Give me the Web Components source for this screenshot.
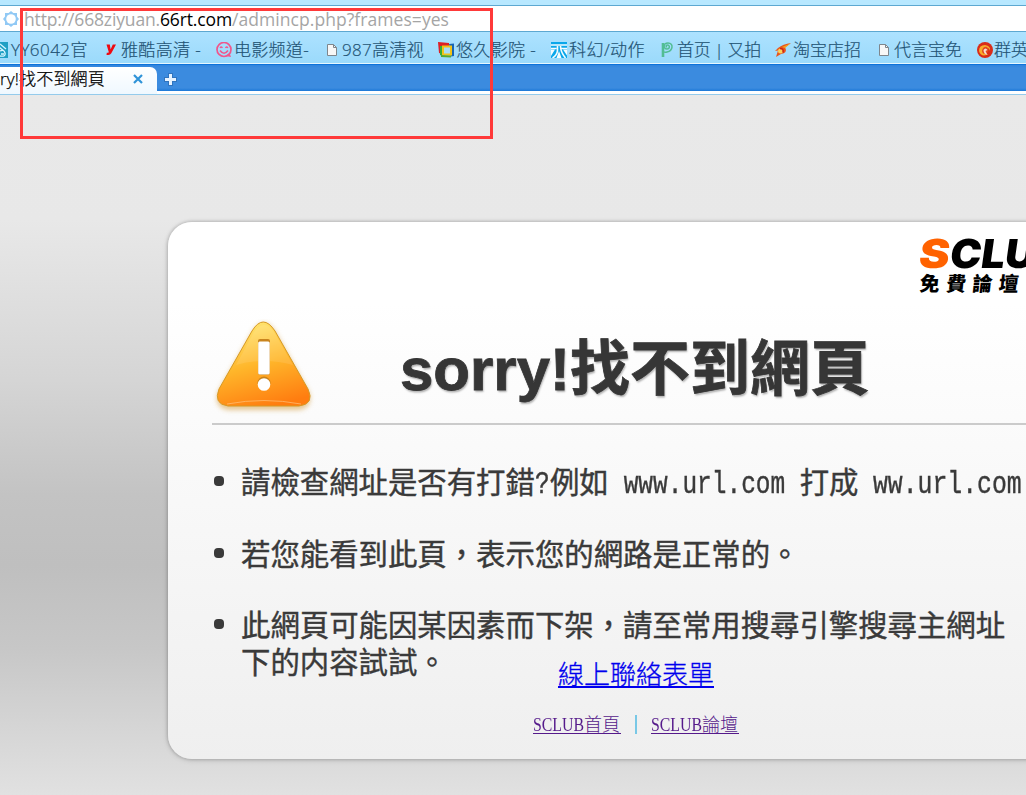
<!DOCTYPE html>
<html lang="zh-Hant">
<head>
<meta charset="utf-8">
<title>sorry!找不到網頁</title>
<style>
  html, body {
    margin: 0;
    height: 100%;
    overflow: hidden;
  }
</style>
</head>
<body>
<browser-window></browser-window>

<script>
// spreads its text over exactly `width` pixels
customElements.define(
  "fit-text",
  class extends HTMLElement {
    constructor() {
      super();
      this.attachShadow({ mode: "open" });
      this.shadowRoot.innerHTML = `
        <style>
          :host { display: inline-block; white-space: nowrap; }
          span { display: inline-block; white-space: pre; transform-origin: 0 50%; }
        </style><span><slot></slot></span>`;
    }

    connectedCallback() {
      const span = this.shadowRoot.querySelector("span");
      const width = Number(this.getAttribute("width"));
      this.style.width = width + "px";
      if (this.hasAttribute("squeeze")) {
        // offsetWidth ignores the skew of a parent
        span.style.transform = `scaleX(${width / span.offsetWidth})`;
      } else {
        const natural = span.getBoundingClientRect().width;
        span.style.letterSpacing = (width - natural) / [...this.textContent].length + "px";
      }
    }
  }
);

const page = '<path d="M3.500 2.500h6l3 3v8h-9z" fill="#f7f7f7" stroke="#7f868c"/><path d="M9.500 2.500v3h3" fill="none" stroke="#7f868c"/>';
const icons = {
  wave: '<rect width="16" height="16" fill="#1f9fc4"/><path d="M8 2l6 5M7 5l5 4M8 9q4-2 5 2t-5 3M9 12h3" fill="none" stroke="#d8f6ff" stroke-width="1.300"/>',
  y: '<path d="M4.500 2.500h3.300l.8 5 2.200-5h3.200l-4.700 8.700q-1 1.800-3 1.800H4.500l.3-2.300h1.300q.8 0 .6-1z" fill="#ee0a12"/>',
  smile: '<circle cx="8" cy="7.500" r="7" fill="none" stroke="#f0568c" stroke-width="1.700"/><path d="M10 14l5 1-1.500-4z" fill="#f0568c"/><path d="M4 8.500q4 5.500 8 0" fill="none" stroke="#f0568c" stroke-width="1.500"/><path d="M4 6q1.200-2 2.400 0M9.500 6q1.200-2 2.400 0" fill="none" stroke="#f0568c" stroke-width="1.300"/>',
  page,
  frame: '<path d="M0 0l11 1v3H4v8L1 11z" fill="#dd1f26"/><path d="M2 4h2v10l-2-1z" fill="#39a935"/><path d="M11 2l5-.5V14l-3 .5z" fill="#1766b5"/><path d="M5 4.500h8v8H5z" fill="#a9dcf5" stroke="#f2c318" stroke-width="2"/><path d="M3 14l10 .6" stroke="#58a82e" stroke-width="2"/>',
  tian: '<path d="M0 0h16v16H0z" fill="#0aa7ea"/><path d="M0 3h16M0 6.500h5.500M10.500 6.500H16M6.500 4v4q0 5-5 8M9.500 4q0 6 5 12" stroke="#f3fcff" stroke-width="1.600" fill="none"/><path d="M8 9l2.500 7h-5zM0 7.500h4L0 14zM16 7.500h-4l4 6z" fill="#f3fcff"/>',
  leaf: '<path d="M4 1v14" stroke="#52bd94" stroke-width="2.600"/><path d="M4 9q1 2 4 1c6-1 7-9 1-9-5 0-5 6-1 6 3 0 3-4 .5-4-2 0-1.500 2-.3 1.900" fill="none" stroke="#52bd94" stroke-width="1.500"/>',
  comet: '<path d="M16 1Q8 2 3 6l-3 3 3-.5L1 15l5-3q7-1 4-7z" fill="#e8551c"/><path d="M15.500 1.500L7 5l3 1zM15 3l-4 5z" fill="#f7a01c"/><circle cx="5.500" cy="9" r="2.500" fill="#fbd35a"/><path d="M5 6.500q4 0 3 4" fill="none" stroke="#cf2416" stroke-width="1.600"/>',
  swirl: '<circle cx="8" cy="8" r="8" fill="#d92d1a"/><path d="M2 9q0-6 6-6 6 1 5 6-1-4-5-3-4 2-1 5 2 2 5 1-8 4-10-3z" fill="#f9ad2c"/><path d="M5 9q1-5 5-4 3 3 0 6-3-1-2-3-1 1-1 4-2-1-2-3z" fill="#e44a20"/><path d="M6.500 8q2-3 4 0l-2 1 2 4q-4-1-4-5z" fill="#f6dfd6"/>'
};

customElements.define(
  "book-mark",
  class extends HTMLElement {
    constructor() {
      super();
      this.attachShadow({ mode: "open" });
    }

    connectedCallback() {
      this.shadowRoot.innerHTML = `
        <style>
          :host {
            display: flex;
            align-items: center;
            gap: var(--gap, 2px);
            flex: none;
          }
          svg { flex: none; }
        </style>
        <svg width="16" height="16" viewBox="0 0 16 16">${icons[this.getAttribute("icon")]}</svg>
        <slot></slot>
      `;
    }
  }
);

customElements.define(
  "address-bar",
  class extends HTMLElement {
    constructor() {
      super();
      this.attachShadow({ mode: "open" });
      this.shadowRoot.innerHTML = `
        <style>
          :host {
            display: flex;
            align-items: center;
            box-sizing: border-box;
            height: 27px;
            margin-top: 5px;
            padding-left: 3px;
            gap: 5px;
            border: solid #5da8d1;
            border-width: 1px 0;
            background: #fff;
            font: 17.500px/24px "Open Sans", "Noto Sans", sans-serif;
            color: #a5a5a5;
          }
          b { font-weight: 400; color: #000; }
          .url { display: flex; margin-top: 1px; }
        </style>
        <svg width="16" height="16" viewBox="0 0 16 16">
          <path d="M8 0l2.400 2H14v3.600L16 8l-2 2.400V14h-3.600L8 16l-2.400-2H2v-3.600L0 8l2-2.400V2h3.600z" fill="#91c9f5"/>
          <circle cx="8" cy="8" r="4.800" fill="#fff"/>
        </svg>
        <div class="url"><fit-text width="136">http://668ziyuan.</fit-text><b><fit-text width="72">66rt.com</fit-text></b><fit-text width="217">/admincp.php?frames=yes</fit-text></div>
      `;
    }
  }
);

customElements.define(
  "bookmark-bar",
  class extends HTMLElement {
    constructor() {
      super();
      this.attachShadow({ mode: "open" });
      this.shadowRoot.innerHTML = `
        <style>
          :host {
            display: flex;
            box-sizing: border-box;
            height: 32px;
            padding-top: 4px;
            margin-left: -8px;
            border-bottom: 1px solid #e4f6ff;
            background: linear-gradient(#ade2ff, #9bdafb);
            color: #1f5374;
            font: 300 17px/27px "Open Sans", "Noto Sans CJK SC", sans-serif;
            -webkit-text-stroke: .2px;
            overflow: hidden;
          }
        </style>
        <book-mark icon="wave" style="width:110px; --gap:3px"><fit-text width="77">YY6042官</fit-text></book-mark>
        <book-mark icon="y" style="width:114px; --gap:3px"><fit-text width="80">雅酷高清 -</fit-text></book-mark>
        <book-mark icon="smile" style="width:108px"><fit-text width="75">电影频道-</fit-text></book-mark>
        <book-mark icon="page" style="width:114px"><fit-text width="82">987高清视</fit-text></book-mark>
        <book-mark icon="frame" style="width:113px"><fit-text width="80">悠久影院 -</fit-text></book-mark>
        <book-mark icon="tian" style="width:108px"><fit-text width="76">科幻/动作</fit-text></book-mark>
        <book-mark icon="leaf" style="width:116px"><fit-text width="84">首页 | 又拍</fit-text></book-mark>
        <book-mark icon="comet" style="width:101px"><fit-text width="68">淘宝店招</fit-text></book-mark>
        <book-mark icon="page" style="width:101px"><fit-text width="68">代言宝免</fit-text></book-mark>
        <book-mark icon="swirl" style="--gap:1px"><fit-text width="34">群英</fit-text></book-mark>
      `;
    }
  }
);

customElements.define(
  "tab-strip",
  class extends HTMLElement {
    constructor() {
      super();
      this.attachShadow({ mode: "open" });
      this.shadowRoot.innerHTML = `
        <style>
          :host {
            display: flex;
            box-sizing: border-box;
            height: 31px;
            border-bottom: 1px solid #94cbec;
            background: linear-gradient(#0d73da 0 1px, #2f84de 1px, #3b8bdf 4px, #3b8bdf 24px, #1c78d7 27px, #fff 27px);
          }
          .tab {
            display: flex;
            align-items: center;
            justify-content: space-between;
            box-sizing: border-box;
            width: 157px;
            height: 27px;
            margin-top: 3px;
            padding: 0 14px 3px 0;
            border-radius: 0 7px 0 0;
            background: linear-gradient(#fff, #eff8ff);
            font: 300 17px/24px "Open Sans", "Noto Sans CJK TC", sans-serif;
            color: #000;
            -webkit-text-stroke: .25px;
          }
          .plus { margin: 9px 0 0 7px; }
        </style>
        <div class="tab">
          <fit-text width="105">ry!找不到網頁</fit-text>
          <svg width="10" height="10" viewBox="0 0 10 10"><path d="M1 1l8 8M9 1l-8 8" stroke="#2f93d8" stroke-width="2.200"/></svg>
        </div>
        <svg class="plus" width="13" height="13" viewBox="0 0 13 13"><path d="M6.500 0v13M0 6.500h13" stroke="#2f74bf" stroke-width="5"/><path d="M6.500 1v11M1 6.500h11" stroke="#e6f3ff" stroke-width="3"/></svg>
      `;
    }
  }
);

customElements.define(
  "hint-item",
  class extends HTMLElement {
    constructor() {
      super();
      this.attachShadow({ mode: "open" });
      this.shadowRoot.innerHTML = `
        <style>
          :host {
            display: flex;
            gap: 17px;
            white-space: nowrap;
          }
          i {
            flex: none;
            width: 10px;
            height: 10px;
            margin: 14px 0 0 2px;
            border-radius: 4px;
            background: #3a3a3a;
          }
        </style>
        <i></i>
        <div><slot></slot></div>
      `;
    }
  }
);

customElements.define(
  "site-logo",
  class extends HTMLElement {
    constructor() {
      super();
      this.attachShadow({ mode: "open" });
      this.shadowRoot.innerHTML = `
        <style>
          :host {
            display: block;
            width: 150px;
            color: #000;
            white-space: nowrap;
          }
          .name {
            display: flex;
            height: 36px;
            margin-left: -3px;
            font: 900 40px/36px Inter, sans-serif;
            transform: skewX(-8deg);
            transform-origin: 0 100%;
          }
          .name b { color: #ff6200; font-weight: 900; }
          .sub {
            font: 900 20px/21px "Noto Sans CJK TC", sans-serif;
            letter-spacing: 6.300px;
            transform: skewX(-6deg);
          }
        </style>
        <div class="name"><b><fit-text width="31" squeeze>S</fit-text></b><fit-text width="113" squeeze>CLUB</fit-text></div>
        <div class="sub">免費論壇</div>
      `;
    }
  }
);

customElements.define(
  "error-card",
  class extends HTMLElement {
    constructor() {
      super();
      this.attachShadow({ mode: "open" });
      this.shadowRoot.innerHTML = `
        <style>
          :host {
            display: block;
            box-sizing: border-box;
            width: 920px;
            height: 537px;
            padding: 14px 0 0 44px;
            border-radius: 24px;
            background: linear-gradient(#fff 15%, #efefef);
            box-shadow: 0 0 3px 1px rgba(0, 0, 0, .16), 0 1px 6px rgba(0, 0, 0, .12);
            color: #3a3a3a;
          }
          site-logo { margin-left: 708px; height: 58px; }
          header {
            display: flex;
            height: 129px;
            border-bottom: 2px solid #cbcbcb;
          }
          .warn { margin: 25px 0 0 0; flex: none; }
          h1 {
            margin: 30px 0 0 82px;
            font: bold 60px/92px "Liberation Sans", "Noto Sans CJK TC", sans-serif;
            color: #363636;
            -webkit-text-stroke: .8px;
            text-shadow: 1px 2px 2px rgba(0, 0, 0, .3);
            white-space: nowrap;
          }
          .hints {
            display: grid;
            grid-template-rows: 36px 36px 74px;
            row-gap: 35.500px;
            padding-top: 38px;
            font: 400 29.400px/37px "Noto Sans CJK TC", sans-serif;
            -webkit-text-stroke: .4px;
          }
          .hints hint-item { margin-top: -1px; }
          .mono {
            font-family: "Liberation Mono", monospace;
            font-size: 31px;
            line-height: 20px;
          }
          .links {
            display: grid;
            justify-items: center;
            row-gap: 27px;
            width: 848px;
            margin-top: -22px;
            position: relative;
          }
          .contact {
            font: 300 26px/30px "Noto Sans CJK TC", serif;
            color: #0000ee;
            -webkit-text-stroke: .3px;
            text-decoration: underline 2px;
            text-underline-offset: 2px;
          }
          .pair {
            display: flex;
            align-items: center;
            gap: 14px;
            font: 300 18px/20px "Liberation Serif", "Noto Sans CJK TC", serif;
            color: #551a8b;
          }
          .pair a {
            display: flex;
            width: 88px;
            height: 18px;
            border-bottom: 1px solid #551a8b;
          }
          .pair i { width: 2px; height: 19px; background: #79c8e6; }
        </style>
        <site-logo></site-logo>
        <header>
          <svg class="warn" width="106" height="102" viewBox="0 0 106 102">
            <defs>
              <linearGradient id="body" x1=".3" y1="0" x2=".6" y2="1">
                <stop offset="0" stop-color="#ffe774"/>
                <stop offset=".5" stop-color="#ffb62a"/>
                <stop offset="1" stop-color="#ff7d10"/>
              </linearGradient>
              <filter id="soft" x="-20%" y="-20%" width="140%" height="140%"><feGaussianBlur stdDeviation="2.500"/></filter>
            </defs>
            <path d="M41 12q11-16 22 0l34 61q5 16-11 18H17Q1 89 6 73z" fill="#d5a24c" opacity=".6" filter="url(#soft)"/>
            <path d="M40 12q11-18 23 0l33 58q7 15-9 17H16Q1 85 7 70z" fill="url(#body)" stroke="#d79a24"/>
            <path d="M15 85q37-7 74 0" fill="none" stroke="#ffc07a" opacity=".7"/>
            <path d="M24 46q28-8 57 0L62 13q-10-14-20 0z" fill="#fff" opacity=".1"/>
            <rect x="46" y="20" width="12" height="36" rx="2" fill="#c9841d"/>
            <rect x="46.200" y="22.500" width="11.500" height="33" rx="1.500" fill="#fff"/>
            <circle cx="52" cy="64" r="6.500" fill="#c9841d"/>
            <circle cx="52" cy="65.500" r="6.300" fill="#fff"/>
          </svg>
          <h1>sorry!找不到網頁</h1>
        </header>
        <div class="hints">
          <hint-item>請檢查網址是否有打錯<fit-text class="mono" width="15" squeeze>?</fit-text>例如<fit-text class="mono" width="191" squeeze> www.url.com </fit-text>打成<fit-text class="mono" width="164" squeeze> ww.url.com</fit-text></hint-item>
          <hint-item>若您能看到此頁，表示您的網路是正常的。</hint-item>
          <hint-item>此網頁可能因某因素而下架，請至常用搜尋引擎搜尋主網址<br>下的内容試試。</hint-item>
        </div>
        <div class="links">
          <a class="contact">線上聯絡表單</a>
          <div class="pair">
            <a><fit-text width="51" squeeze>SCLUB</fit-text><fit-text width="36">首頁</fit-text></a>
            <i></i>
            <a><fit-text width="51" squeeze>SCLUB</fit-text><fit-text width="36">論壇</fit-text></a>
          </div>
        </div>
      `;
    }
  }
);

customElements.define(
  "browser-window",
  class extends HTMLElement {
    constructor() {
      super();
      this.attachShadow({ mode: "open" });
      this.shadowRoot.innerHTML = `
        <style>
          :host {
            display: flex;
            flex-direction: column;
            position: relative;
            width: 1026px;
            height: 795px;
            overflow: hidden;
            background: #b8e8ff;
          }
          address-bar, bookmark-bar, tab-strip { flex: none; }
          main {
            flex: 1;
            padding: 127px 0 0 168px;
            background: linear-gradient(#e9e9e9 0, #e8e8e8 125px, #d5d5d5 285px, #c3c3c3 400px, #bfbfbf 470px, #c7c7c7 553px, #e1e1e1 700px);
          }
          .mark {
            position: absolute;
            left: 20px;
            top: 8px;
            box-sizing: border-box;
            width: 473px;
            height: 131px;
            border: 3px solid #ff3939;
          }
        </style>
        <address-bar></address-bar>
        <bookmark-bar></bookmark-bar>
        <tab-strip></tab-strip>
        <main><error-card></error-card></main>
        <div class="mark"></div>
      `;
    }
  }
);
</script>
</body>
</html>
